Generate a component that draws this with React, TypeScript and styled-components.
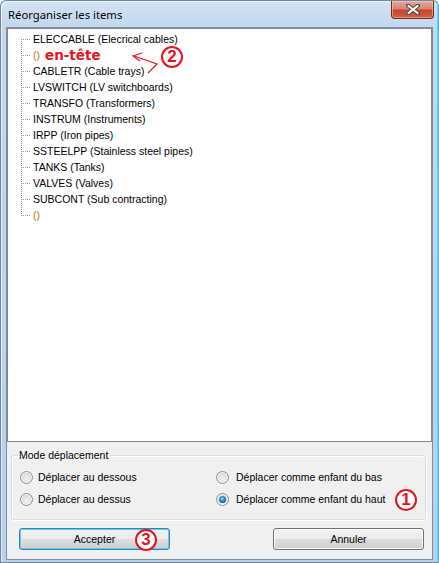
import React from 'react';
import styled, { createGlobalStyle } from 'styled-components';

const GlobalStyle = createGlobalStyle`
  html, body { margin: 0; padding: 0; background: #ffffff; }
  body { font-family: "Liberation Sans", Arial, sans-serif; }
  * { box-sizing: border-box; }
`;

const RED = '#e3141c';

const Window = styled.div`
  position: relative;
  width: 439px;
  height: 563px;
  display: flex;
  flex-direction: column;
  padding: 0 5px 2px 5px;
  border: 1px solid #6f87a2;
  border-right-color: #3fb9ea;
  border-radius: 6px 6px 0 0;
  background: linear-gradient(to bottom, #d3e3f3 0px, #c2d8ee 26px, #b8d0ea 100%);
  box-shadow: inset 1px 1px 0 rgba(255, 255, 255, 0.55), inset -1px 0 0 #6fd3f7;
`;

const TitleBar = styled.div`
  height: 26px;
  display: flex;
  align-items: flex-start;
  justify-content: space-between;
`;

const Title = styled.span`
  font-family: "Noto Sans", "Open Sans", sans-serif;
  font-size: 11.3px;
  line-height: 16px;
  margin: 6px 0 0 2px;
  color: #000;
`;

const CloseButton = styled.div`
  width: 43px;
  height: 18px;
  margin-right: -1px;
  display: flex;
  align-items: center;
  justify-content: center;
  border: 1px solid #6e2a1e;
  border-top: none;
  border-radius: 0 0 4px 4px;
  background: linear-gradient(to bottom, #e8aa9c 0%, #d9826f 45%, #c7452a 55%, #d0603d 100%);
  box-shadow: inset 0 0 0 1px rgba(255, 220, 210, 0.45);
`;

const Client = styled.div`
  flex: 1;
  display: flex;
  flex-direction: column;
  background: #f0f0f0;
  border: 1px solid #7d8ea3;
`;

const TreeBox = styled.div`
  height: 414px;
  background: #ffffff;
  border: 1px solid #828790;
  padding-top: 2px;
`;

const Row = styled.div`
  display: flex;
  align-items: center;
  height: 16px;
  padding-left: 13px;
`;

const Label = styled.span<{ $muted?: boolean }>`
  font-size: 10.5px;
  line-height: 16px;
  margin-left: 2px;
  color: ${(p) => (p.$muted ? '#c0701a' : '#000')};
  white-space: nowrap;
`;

const Note = styled.span`
  font-family: "DejaVu Sans", Verdana, sans-serif;
  font-weight: bold;
  font-size: 13.5px;
  line-height: 16px;
  color: ${RED};
  margin-left: 5px;
`;

const GroupBox = styled.fieldset`
  margin: 6px 6px 0 4px;
  padding: 4px 8px 9px 8px;
  border: 1px solid #d5dfe5;
  border-radius: 3px;
  box-shadow: inset 1px 1px 0 #ffffff, 1px 1px 0 #ffffff;
  min-inline-size: 0;
`;

const Legend = styled.legend`
  font-size: 10.5px;
  line-height: 14px;
  padding: 0 1px;
  margin-left: -2px;
  color: #000;
`;

const RadioGrid = styled.div`
  display: grid;
  grid-template-columns: 196px 1fr;
  grid-auto-rows: 22px;
`;

const RadioItem = styled.label<{ $wide?: boolean }>`
  display: flex;
  align-items: center;
  gap: ${(p) => (p.$wide ? 7 : 5)}px;
  font-size: 10.5px;
  color: #000;
  white-space: nowrap;
`;

const RadioCircle = styled.span<{ $checked?: boolean }>`
  position: relative;
  width: 13px;
  height: 13px;
  flex: none;
  border-radius: 50%;
  border: 1px solid #8e8f8f;
  background: radial-gradient(circle at 50% 60%, #f4f4f4 0%, #dadada 60%, #cfcfcf 100%);
  box-shadow: inset 0 0 0 1px #f6f6f6;
  &::after {
    content: '';
    display: ${(p) => (p.$checked ? 'block' : 'none')};
    position: absolute;
    left: 2px;
    top: 2px;
    width: 7px;
    height: 7px;
    border-radius: 50%;
    background: radial-gradient(circle at 45% 40%, #8fe0ff 0%, #2c8fd0 40%, #15466f 80%, #0e2f4c 100%);
  }
`;

const ButtonRow = styled.div`
  display: flex;
  justify-content: space-between;
  margin: 8px 8px 8px 12px;
`;

const Button = styled.button<{ $default?: boolean }>`
  width: 151px;
  height: 22px;
  padding: 0;
  font-family: "Liberation Sans", Arial, sans-serif;
  font-size: 10.5px;
  color: #000;
  border-radius: 3px;
  border: 1px solid ${(p) => (p.$default ? '#3c7fb1' : '#707070')};
  background: linear-gradient(to bottom, #f2f2f2 0%, #ebebeb 50%, #dddddd 51%, #cfcfcf 100%);
  box-shadow: inset 0 0 0 1px ${(p) => (p.$default ? '#4cd2fb' : 'rgba(255,255,255,0.85)')};
`;

const Badge = styled.span<{ $x: number; $y: number }>`
  position: absolute;
  left: ${(p) => p.$x - 11}px;
  top: ${(p) => p.$y - 11}px;
  width: 22px;
  height: 22px;
  border: 2.5px solid ${RED};
  border-radius: 50%;
  background: #ffffff;
  color: ${RED};
  font-family: "Liberation Sans", Arial, sans-serif;
  font-weight: bold;
  font-size: 17px;
  line-height: 17px;
  text-align: center;
`;

const ArrowLayer = styled.svg`
  position: absolute;
  left: 0;
  top: 0;
  pointer-events: none;
`;

const items = [
  { text: 'ELECCABLE (Elecrical cables)' },
  { text: '()', muted: true, note: 'en-tête' },
  { text: 'CABLETR (Cable trays)' },
  { text: 'LVSWITCH (LV switchboards)' },
  { text: 'TRANSFO (Transformers)' },
  { text: 'INSTRUM (Instruments)' },
  { text: 'IRPP (Iron pipes)' },
  { text: 'SSTEELPP (Stainless steel pipes)' },
  { text: 'TANKS (Tanks)' },
  { text: 'VALVES (Valves)' },
  { text: 'SUBCONT (Sub contracting)' },
  { text: '()', muted: true },
];

function Connector({ first, last }: { first: boolean; last: boolean }) {
  const y1 = first ? 8 : 0;
  const y2 = last ? 9 : 16;
  return (
    <svg width="10" height="16" shapeRendering="crispEdges" style={{ flex: 'none' }}>
      <line x1="0.5" y1={y1} x2="0.5" y2={y2} stroke="#909090" strokeDasharray="1 1" />
      <line x1="2" y1="8.5" x2="10" y2="8.5" stroke="#909090" strokeDasharray="1 1" />
    </svg>
  );
}

function CloseGlyph() {
  return (
    <svg width="14" height="11" viewBox="0 0 14 11">
      <path d="M2 1.5 L12 9.5 M12 1.5 L2 9.5" stroke="#4a4a4a" strokeWidth="4" strokeLinecap="round" />
      <path d="M2.5 2 L11.5 9 M11.5 2 L2.5 9" stroke="#ffffff" strokeWidth="2.2" strokeLinecap="round" />
    </svg>
  );
}

export default function App() {
  return (
    <>
      <GlobalStyle />
      <Window>
        <TitleBar>
          <Title>Réorganiser les items</Title>
          <CloseButton>
            <CloseGlyph />
          </CloseButton>
        </TitleBar>
        <Client>
          <TreeBox>
            {items.map((it, i) => (
              <Row key={i}>
                <Connector first={i === 0} last={i === items.length - 1} />
                <Label $muted={it.muted}>{it.text}</Label>
                {it.note && <Note>{it.note}</Note>}
              </Row>
            ))}
          </TreeBox>
          <GroupBox>
            <Legend>Mode déplacement</Legend>
            <RadioGrid>
              <RadioItem>
                <RadioCircle />
                Déplacer au dessous
              </RadioItem>
              <RadioItem $wide>
                <RadioCircle />
                Déplacer comme enfant du bas
              </RadioItem>
              <RadioItem>
                <RadioCircle />
                Déplacer au dessus
              </RadioItem>
              <RadioItem $wide>
                <RadioCircle $checked />
                Déplacer comme enfant du haut
              </RadioItem>
            </RadioGrid>
          </GroupBox>
          <ButtonRow>
            <Button $default>Accepter</Button>
            <Button>Annuler</Button>
          </ButtonRow>
        </Client>
        <ArrowLayer width="439" height="563">
          <polyline points="147,72 156,63 133,55" fill="none" stroke={RED} strokeWidth="1.2" />
          <polyline points="141,52 132,55 139,60" fill="none" stroke={RED} strokeWidth="1.2" />
        </ArrowLayer>
        <Badge $x={171} $y={56}>2</Badge>
        <Badge $x={405} $y={499}>1</Badge>
        <Badge $x={145} $y={539}>3</Badge>
      </Window>
    </>
  );
}
